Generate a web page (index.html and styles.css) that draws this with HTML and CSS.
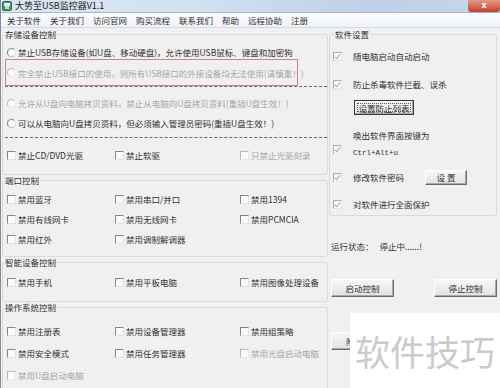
FILE: index.html
```html
<!DOCTYPE html>
<html lang="zh-CN">
<head>
  <meta charset="UTF-8">
  <title>大势至USB监控器V1.1</title>
  <link rel="stylesheet" href="styles.css">
</head>
<body>
  <div class="window">
    <div class="titlebar">
      <svg class="app-icon" width="10" height="10" viewBox="0 0 10 10">
        <rect x="0.5" y="0.5" width="9" height="9" rx="1.5" fill="#3f9a6a" stroke="#2d6e4c"/>
        <rect x="2" y="2" width="6" height="3" fill="#e8f4ec"/>
        <rect x="3" y="5" width="4" height="3" fill="#bfe0cb"/>
      </svg>
      <span class="title">大势至USB监控器V1.1</span>
      <span class="close">x</span>
    </div>

    <ul class="menubar">
      <li>关于软件</li>
      <li>关于我们</li>
      <li>访问官网</li>
      <li>购买流程</li>
      <li>联系我们</li>
      <li>帮助</li>
      <li>远程协助</li>
      <li>注册</li>
    </ul>

    <div class="main">
      <div class="left">
        <fieldset class="group storage">
          <legend>存储设备控制</legend>
          <div class="opt first"><span class="rb"></span>禁止USB存储设备(如U盘、移动硬盘)，允许使用USB鼠标、键盘和加密狗</div>
          <div class="warn"><span class="rb dim"></span><span class="dim-text">完全禁止USB接口的使用，则所有USB接口的外接设备均无法使用(请慎重！)</span></div>
          <div class="dash"></div>
          <div class="opt after-dash"><span class="rb dim"></span><span class="dim-text">允许从U盘向电脑拷贝资料，禁止从电脑向U盘拷贝资料(重插U盘生效！)</span></div>
          <div class="opt"><span class="rb"></span>可以从电脑向U盘拷贝资料，但必须输入管理员密码(重插U盘生效！)</div>
          <div class="dash second"></div>
          <div class="grid3 drives">
            <div class="opt"><span class="cb"></span>禁止CD/DVD光驱</div>
            <div class="opt"><span class="cb"></span>禁止软驱</div>
            <div class="opt"><span class="cb dim"></span><span class="dim-text">只禁止光驱刻录</span></div>
          </div>
        </fieldset>

        <fieldset class="group ports">
          <legend>端口控制</legend>
          <div class="grid3">
            <div class="opt"><span class="cb"></span>禁用蓝牙</div>
            <div class="opt"><span class="cb"></span>禁用串口/并口</div>
            <div class="opt"><span class="cb"></span>禁用1394</div>
            <div class="opt"><span class="cb"></span>禁用有线网卡</div>
            <div class="opt"><span class="cb"></span>禁用无线网卡</div>
            <div class="opt"><span class="cb"></span>禁用PCMCIA</div>
            <div class="opt"><span class="cb"></span>禁用红外</div>
            <div class="opt"><span class="cb"></span>禁用调制解调器</div>
          </div>
        </fieldset>

        <fieldset class="group smart">
          <legend>智能设备控制</legend>
          <div class="grid3">
            <div class="opt"><span class="cb"></span>禁用手机</div>
            <div class="opt"><span class="cb"></span>禁用平板电脑</div>
            <div class="opt"><span class="cb"></span>禁用图像处理设备</div>
          </div>
        </fieldset>

        <fieldset class="group system">
          <legend>操作系统控制</legend>
          <div class="grid3">
            <div class="opt"><span class="cb"></span>禁用注册表</div>
            <div class="opt"><span class="cb"></span>禁用设备管理器</div>
            <div class="opt"><span class="cb"></span>禁用组策略</div>
            <div class="opt"><span class="cb"></span>禁用安全模式</div>
            <div class="opt"><span class="cb"></span>禁用任务管理器</div>
            <div class="opt"><span class="cb dim"></span><span class="dim-text">禁用光盘启动电脑</span></div>
            <div class="opt"><span class="cb dim"></span><span class="dim-text">禁用U盘启动电脑</span></div>
          </div>
        </fieldset>
      </div>

      <div class="right">
        <fieldset class="settings">
          <legend>软件设置</legend>
          <div class="srow"><span class="cb on"></span>随电脑启动自动启动</div>
          <div class="srow"><span class="cb on"></span>防止杀毒软件拦截、误杀</div>
          <button class="btn default">设置防止列表</button>
          <div class="hotkey">
            <span class="cb on"></span>
            <div class="hotkey-text">
              <div>唤出软件界面按键为</div>
              <div class="keys">Ctrl+Alt+u</div>
            </div>
          </div>
          <div class="srow pwd"><span class="cb on"></span>修改软件密码<button class="btn small">设 置</button></div>
          <div class="srow protect"><span class="cb on"></span>对软件进行全面保护</div>
        </fieldset>

        <div class="status">运行状态：<span class="state">停止中......!</span></div>

        <div class="actions">
          <button class="btn wide">启动控制</button>
          <button class="btn wide">停止控制</button>
        </div>
        <button class="btn wide extra"><span class="peek">附</span></button>
      </div>
    </div>

    <div class="watermark">软件技巧</div>
  </div>
</body>
</html>
```

FILE: styles.css
```css
/* general styling */
* {
  box-sizing: border-box;
  margin: 0;
  padding: 0;
}

html, body {
  height: 100%;
}

body {
  background-color: #f0f0f0;
  color: #303030;
  font-family: "Noto Sans CJK SC", "Noto Sans", sans-serif;
  font-size: 8.5px;
  overflow: hidden;
}

.window {
  border-left: 1px solid #7f8c9c;
  height: 100%;
  position: relative;
}

/* title bar */
.titlebar {
  align-items: center;
  background: linear-gradient(to right, #dce7f4 0%, #d2e0f0 40%, #bdd0e7 75%, #c6d7eb 100%);
  border-bottom: 1px solid #a8b8cc;
  display: flex;
  height: 13px;
}

.app-icon {
  flex: none;
  margin: 0 3px 0 1px;
}

.title {
  color: #1a1a1a;
  font-size: 9px;
  line-height: 12px;
}

.close {
  align-self: flex-start;
  background: linear-gradient(#e39a88, #c63e28);
  border-radius: 0 0 3px 3px;
  color: #ffffff;
  font-family: "DejaVu Sans", sans-serif;
  font-size: 8px;
  font-weight: bold;
  height: 12px;
  line-height: 11px;
  margin-left: auto;
  text-align: center;
  width: 32px;
}

/* menu */
.menubar {
  align-items: center;
  background: linear-gradient(#fbfcfe, #eef2f8);
  border-bottom: 1px solid #d5dbe3;
  display: flex;
  gap: 9px;
  height: 15px;
  list-style: none;
  padding-left: 6px;
}

.main {
  align-items: flex-start;
  display: flex;
}

.left {
  flex: none;
  width: 327px;
}

.right {
  flex: 1;
  min-width: 0;
}

/* group boxes */
fieldset {
  border: 1px solid #d6dadd;
  border-radius: 3px;
  min-width: 0;
}

legend {
  font-size: 8.5px;
  line-height: 10px;
  padding: 0 1px;
}

.group {
  margin-left: 1px;
  padding: 0 0 0 4px;
}

.group legend {
  margin-left: -3px;
}

.storage {
  margin-top: 1px;
  padding-top: 6px;
  padding-bottom: 9px;
}

.ports {
  padding-top: 4px;
  padding-bottom: 7px;
}

.smart {
  padding-top: 5px;
  padding-bottom: 9px;
}

.system {
  padding-top: 8px;
  padding-bottom: 20px;
}

.system .opt {
  height: 22px;
}

/* options */
.opt {
  align-items: center;
  display: flex;
  height: 20px;
  white-space: nowrap;
}

.opt.first {
  height: 14px;
}

.opt.after-dash {
  margin-top: 6px;
}

.warn {
  align-items: center;
  border: 1px solid #c48584;
  display: flex;
  height: 27px;
  margin-left: -2px;
  padding-left: 1px;
  white-space: nowrap;
  width: 293px;
}

.dash {
  border-top: 1px dashed #6a6a6a;
  margin-left: -2px;
}

.dash.second {
  margin-top: 4px;
}

.grid3 {
  display: grid;
  grid-template-columns: 108px 125px 1fr;
}

.drives {
  margin-top: 7px;
}

.dim-text {
  color: #a6a6a6;
}

.cb,
.rb {
  background-color: #fafafa;
  border: 1px solid;
  border-color: #858585 #e2e2e2 #e2e2e2 #858585;
  display: inline-block;
  flex: none;
  height: 9px;
  margin-right: 2px;
  position: relative;
  width: 9px;
}

.rb {
  border-color: #8a8a8a #dedede #b8b8b8 #7a7a7a;
  border-radius: 50%;
}

.cb.dim,
.rb.dim {
  border-color: #b8b8b8 #e8e8e8 #e8e8e8 #b8b8b8;
}

.cb.on {
  border-color: #ababab #e6e6e6 #e6e6e6 #ababab;
}

.cb.on::after {
  border-bottom: 1px solid #a8a8a8;
  border-right: 1px solid #a8a8a8;
  content: "";
  height: 5px;
  left: 2px;
  position: absolute;
  top: 0;
  transform: rotate(40deg);
  width: 2px;
}

/* software settings */
.settings {
  margin: 1px 3px 0 1px;
  padding: 3px 0 1px 3px;
}

.settings legend {
  margin-left: 1px;
}

.settings .cb {
  margin-right: 11px;
}

.srow {
  align-items: center;
  display: flex;
  height: 28px;
  white-space: nowrap;
}

.srow.pwd {
  height: 24px;
  margin-top: 6px;
}

.srow.protect {
  height: 20px;
  margin-top: 5px;
}

.hotkey {
  align-items: flex-start;
  display: flex;
  margin-top: 14px;
}

.hotkey .cb {
  margin-top: 16px;
}

.hotkey-text {
  line-height: 12px;
}

.keys {
  font-family: "Liberation Mono", monospace;
  font-size: 7.5px;
  margin-top: 6px;
}

/* buttons */
.btn {
  align-items: center;
  background: linear-gradient(#f7f7f7, #e2e2e2);
  border: 1px solid;
  border-color: #ffffff #6b6b6b #6b6b6b #ffffff;
  box-shadow: inset -1px -1px 0 #a8a8a8;
  color: #303030;
  display: flex;
  font: inherit;
  justify-content: center;
}

.btn.default {
  border-color: #3a3a3a;
  height: 15px;
  margin: 2px 0 0 21px;
  outline: 1px dotted #555555;
  outline-offset: -4px;
  width: 60px;
}

.btn.small {
  height: 15px;
  margin-left: 21px;
  width: 42px;
}

.btn.wide {
  height: 18px;
  width: 63px;
}

.status {
  line-height: 12px;
  margin-top: 24px;
  padding-left: 3px;
  white-space: nowrap;
}

.state {
  margin-left: 6px;
}

.actions {
  display: flex;
  justify-content: space-between;
  margin-top: 27px;
  padding: 0 3px;
}

.btn.extra {
  justify-content: flex-start;
  margin: 35px 0 0 3px;
  padding-left: 14px;
}

.peek {
  display: inline-block;
  overflow: hidden;
  width: 4px;
}

/* watermark over the window */
.watermark {
  background-color: #ffffff;
  color: #cbcbcb;
  font-size: 35px;
  height: 75px;
  left: 349px;
  line-height: 75px;
  padding-left: 5px;
  position: absolute;
  top: 313px;
  white-space: nowrap;
  width: 151px;
}
```
